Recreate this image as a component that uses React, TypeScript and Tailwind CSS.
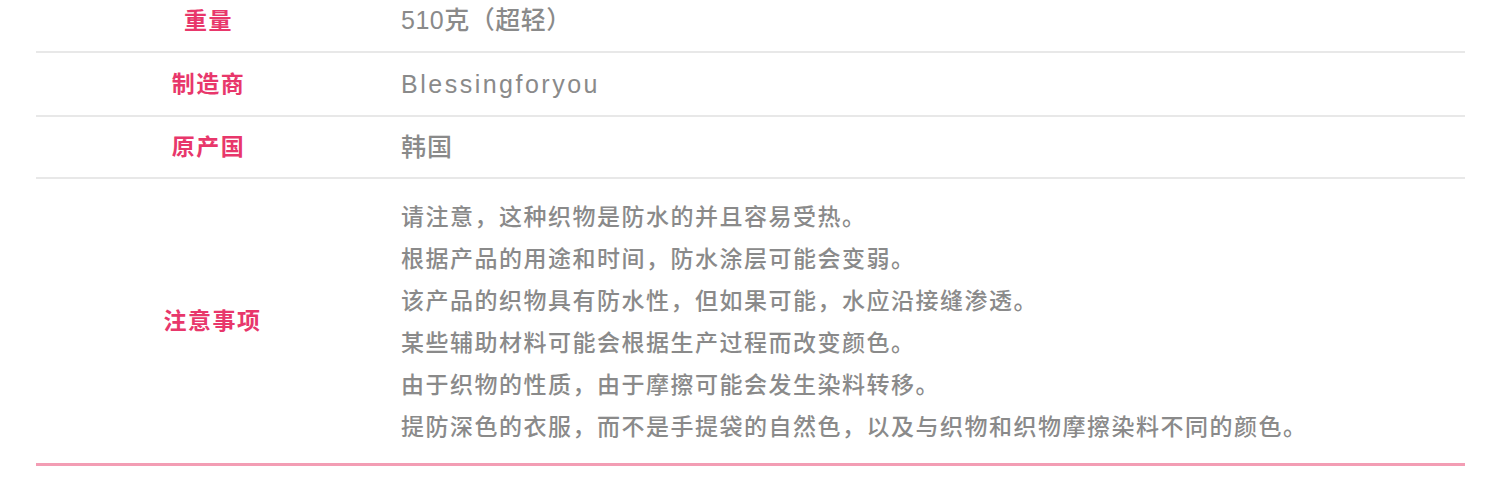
const rows = [
  { label: "重量", value: "510克（超轻）", track: "tracking-[0.5px]" },
  { label: "制造商", value: "Blessingforyou", track: "tracking-[2.5px]" },
  { label: "原产国", value: "韩国", track: "tracking-[1px]" },
];

const notes = [
  "请注意，这种织物是防水的并且容易受热。",
  "根据产品的用途和时间，防水涂层可能会变弱。",
  "该产品的织物具有防水性，但如果可能，水应沿接缝渗透。",
  "某些辅助材料可能会根据生产过程而改变颜色。",
  "由于织物的性质，由于摩擦可能会发生染料转移。",
  "提防深色的衣服，而不是手提袋的自然色，以及与织物和织物摩擦染料不同的颜色。",
];

const font = "font-['Liberation_Sans','Noto_Sans_CJK_SC',sans-serif]";

export default function App() {
  return (
    <div className={`w-[1500px] h-[496px] bg-white overflow-hidden ${font}`}>
      <div className="mx-[36px] w-[1429px]">
        {/* Spec rows */}
        {rows.map((row, i) => (
          <div
            key={row.label}
            className={`flex items-center border-b-2 border-[#e8e8e8] ${
              i === 0 ? "h-[53px] pb-[9px]" : i === 1 ? "h-[64px] pt-[1px]" : "h-[62px] pt-[1px]"
            }`}
          >
            <div className="w-[345px] text-center text-[23px] font-bold tracking-[1.5px] text-[#e8376b]">
              {row.label}
            </div>
            <div className={`pl-[20px] text-[25px] font-medium text-[#8a8a8a] ${row.track}`}>
              {row.value}
            </div>
          </div>
        ))}

        {/* Notes */}
        <div className="flex items-center h-[287px] border-b-[3px] border-[#f39db4] pt-[1px]">
          <div className="w-[345px] text-center text-[23px] font-bold tracking-[1.5px] text-[#e8376b] pl-[8px]">
            注意事项
          </div>
          <div className="pl-[20px] text-[23px] tracking-[1.5px] leading-[42px] font-medium text-[#8a8a8a]">
            {notes.map((line) => (
              <div key={line}>{line}</div>
            ))}
          </div>
        </div>
      </div>
    </div>
  );
}
